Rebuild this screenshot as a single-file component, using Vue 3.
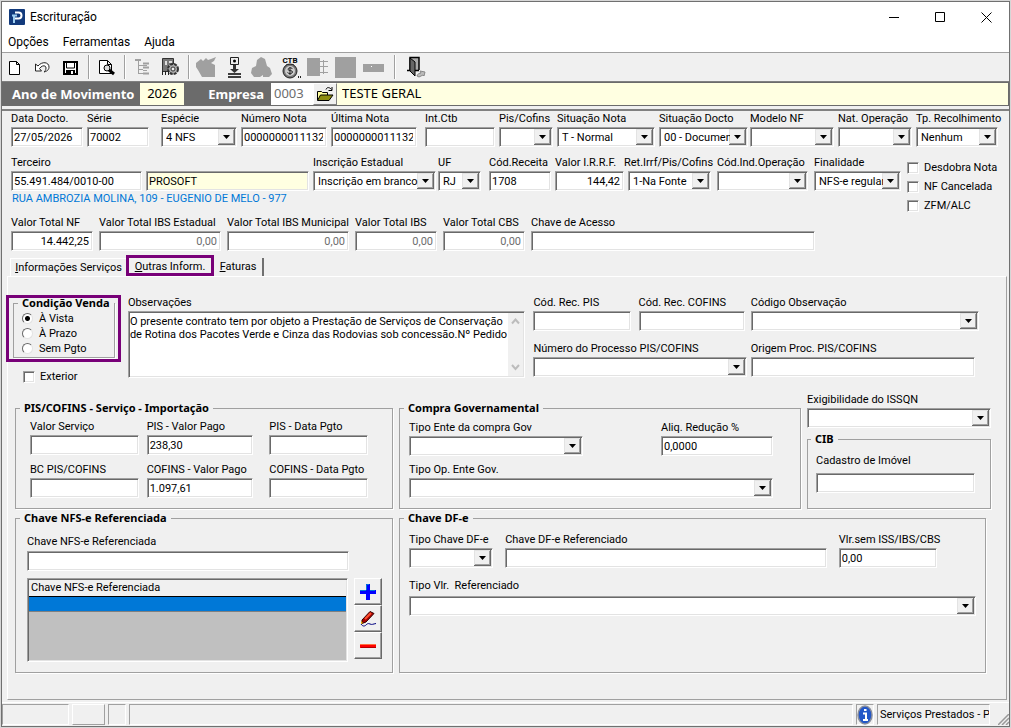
<template>
  <div class="window">
    <header class="title-bar">
      <svg class="logo" width="16" height="16" viewBox="0 0 16 16">
        <rect width="16" height="16" rx="1" fill="#123a7c" />
        <path d="M6 3.500h3.500a3 3 0 0 1 0 6H6" fill="none" stroke="#fff" stroke-width="2" />
        <path d="M3 6.500h5M5 7v7" fill="none" stroke="#9fd0f2" stroke-width="2" />
      </svg>
      <span class="title">Escrituração</span>
      <button class="win-btn" aria-label="Minimizar">
        <svg width="11" height="11"><path d="M0 5.500h10" stroke="#000" /></svg>
      </button>
      <button class="win-btn" aria-label="Maximizar">
        <svg width="11" height="11"><path d="M.5.5h9v9h-9z" fill="none" stroke="#000" /></svg>
      </button>
      <button class="win-btn" aria-label="Fechar">
        <svg width="11" height="11"><path d="M.5.5l10 10M10.500.5l-10 10" stroke="#000" /></svg>
      </button>
    </header>

    <nav class="menu">
      <a href="#">Opções</a>
      <a href="#">Ferramentas</a>
      <a href="#">Ajuda</a>
    </nav>

    <div class="toolbar">
      <button class="tool" aria-label="Novo">
        <svg width="24" height="24"><path d="M7.500 6.500h7l3 3v10h-10zM14.500 6.500v3h3" fill="#fff" stroke="#000" /></svg>
      </button>
      <button class="tool" aria-label="Desfazer">
        <svg width="24" height="24"><path d="M5.500 9v7h6l-2-2.500C12 10 16 10 16 13c0 2-1 3-2 4 4-1 5-3 5-5 0-5-7-6-11-1z" fill="#fff" stroke="#222" /></svg>
      </button>
      <button class="tool" aria-label="Salvar">
        <svg width="24" height="24">
          <path d="M6 7h13v12H6z" fill="#fff" stroke="#000" stroke-width="2" />
          <path d="M8.500 7v6h8V7" fill="none" stroke="#000" />
          <path d="M8 15h9v4H8z" fill="#000" /><path d="M13 16h2v3h-2z" fill="#fff" />
        </svg>
      </button>
      <span class="sep"></span>
      <button class="tool" aria-label="Visualizar">
        <svg width="24" height="24">
          <path d="M5.500 5.500h8l4 4v9h-12zM13.500 5.500v4h4" fill="#fff" stroke="#000" />
          <circle cx="13" cy="13" r="3" fill="#ddd" stroke="#000" /><path d="M15 15l5 4" stroke="#000" stroke-width="3" />
        </svg>
      </button>
      <span class="sep"></span>
      <button class="tool" aria-label="Plano">
        <svg width="24" height="24" fill="none" stroke="#a0a0a0">
          <path d="M8.500 6v13M9 10.500h4M9 14.500h4M9 18.500h4" />
          <path d="M5 5h6M13 8.500h6M13 12.500h6M13 18.500h6" stroke-width="2" />
          <path d="M13 10.500h4M13 15.500h4" />
        </svg>
      </button>
      <button class="tool" aria-label="Configurar">
        <svg width="24" height="24">
          <path d="M4.500 3.500h11v13h-11z" fill="#777" stroke="#333" /><path d="M7 6h2v4H7zM11 6h3v2h-3zM11 10h2v2h-2z" fill="#ddd" />
          <circle cx="15" cy="14" r="5" fill="#aaa" stroke="#333" stroke-width="2" stroke-dasharray="3 1" />
          <circle cx="15" cy="14" r="2" fill="#f0f0f0" stroke="#333" /><path d="M4.500 16v4M7.500 16v4M10.500 16v4" stroke="#222" />
        </svg>
      </button>
      <span class="sep"></span>
      <button class="tool" aria-label="Impostos" disabled>
        <svg width="24" height="24"><path d="M2 8l5-4 2 2 3-3 2 2 3-1 5-2-2 4-3 2 4 2v12H8l-4-7-2-3z" fill="#a0a0a0" /></svg>
      </button>
      <button class="tool" aria-label="Importar">
        <svg width="24" height="24">
          <path d="M8.500 2.500h8v7h-8z" fill="#eee" stroke="#222" /><circle cx="12.500" cy="6" r="1.500" />
          <path d="M11 10h3v4h3l-4.500 4L8 14h3z" fill="#333" /><path d="M6 19h13M6 22h13" stroke="#000" stroke-width="1.500" />
        </svg>
      </button>
      <button class="tool" aria-label="Saldos" disabled>
        <svg width="24" height="24"><path d="M11 2l4 2 2 7 3 2 2 6-3 3h-6v-2l-3 2H4l-3-4 1-5 4-2 1-6z" fill="#a0a0a0" /></svg>
      </button>
      <button class="tool" aria-label="Contabilidade">
        <svg width="24" height="24">
          <text x="12" y="8" text-anchor="middle" class="ctb">CTB</text>
          <path d="M8 9h8l-2 3h-4z" fill="#333" />
          <circle cx="12" cy="16" r="7" fill="#777" stroke="#222" /><circle cx="12" cy="16" r="5" fill="#ccc" />
          <path d="M14.500 14c-1-2-5-1-4.500.5s4.500.5 4.500 2.500-4 2-5 .5M12 12v8" fill="none" stroke="#222" />
          <path d="M20 22h3" stroke="#222" stroke-width="2" stroke-dasharray="1 1" />
        </svg>
      </button>
      <button class="tool" aria-label="Transferir" disabled>
        <svg width="24" height="24"><path d="M1 3h13v18H1z" fill="#a0a0a0" /><path d="M14 6.500h8M14 11.500h8M14 17.500h8M17.500 5v14" stroke="#a0a0a0" /></svg>
      </button>
      <button class="tool" aria-label="Quadro" disabled>
        <svg width="24" height="24"><path d="M1 2h21v21H1z" fill="#a0a0a0" /></svg>
      </button>
      <button class="tool" aria-label="Baixar" disabled>
        <svg width="24" height="24"><path d="M1 9h21v8H1z" fill="#a0a0a0" /><path d="M9 11h1v1H9z" fill="#fff" /></svg>
      </button>
      <span class="sep sep-exit"></span>
      <button class="tool" aria-label="Sair">
        <svg width="24" height="24">
          <path d="M6 15V2.500h9V15M3 15.500h12" fill="#aaa" stroke="#000" stroke-width="1.500" />
          <path d="M6 3l5 4v14l-5-5z" fill="#666" stroke="#000" />
          <path d="M13 21c0-2 3-3 4-3l-1-2 5 1-1 4-1-1-4 2z" fill="#bbb" stroke="#888" />
        </svg>
      </button>
    </div>

    <div class="company">
      <label class="band-year" for="ano">Ano de Movimento</label>
      <input id="ano" class="year" value="2026">
      <label class="band-company" for="empresa">Empresa</label>
      <input id="empresa" class="code" value="0003" readonly>
      <button class="open" aria-label="Abrir empresa">
        <svg width="18" height="16">
          <path d="M1.500 14V5.500h4l1 1h5V9" fill="#ffff9c" stroke="#000" />
          <path d="M1.500 14.500l3-5.500H17l-4 5.500z" fill="#8c8c10" stroke="#000" />
          <path d="M10 3.500c1-3 4-2 5.500 0M16 1v3.500h-3.500" fill="none" stroke="#000" />
        </svg>
      </button>
      <input class="name" aria-label="Nome da empresa" value="TESTE GERAL" readonly>
    </div>

    <main class="form">
      <div class="row row-doc">
        <div class="field"><label for="data">Data Docto.</label><input id="data" value="27/05/2026"></div>
        <div class="field end-12"><label for="serie">Série</label><input id="serie" value="70002"></div>
        <div class="field"><label for="especie">Espécie</label><select id="especie"><option>4 NFS</option></select></div>
        <div class="field"><label for="numero">Número Nota</label><input id="numero" value="0000000011132"></div>
        <div class="field end-8"><label for="ultima">Última Nota</label><input id="ultima" value="0000000011132"></div>
        <div class="field"><label for="intctb">Int.Ctb</label><input id="intctb"></div>
        <div class="field"><label for="pis">Pis/Cofins</label><select id="pis"><option></option></select></div>
        <div class="field"><label for="sitnota">Situação Nota</label><select id="sitnota"><option>T - Normal</option></select></div>
        <div class="field end-2"><label for="sitdoc">Situação Docto</label><select id="sitdoc"><option>00 - Documento Regular</option></select></div>
        <div class="field"><label for="modelo">Modelo NF</label><select id="modelo"><option></option></select></div>
        <div class="field"><label for="natop">Nat. Operação</label><select id="natop"><option></option></select></div>
        <div class="field end-0"><label for="recolh">Tp. Recolhimento</label><select id="recolh"><option>Nenhum</option></select></div>
      </div>

      <div class="third">
        <div class="third-main">
          <div class="row row-third">
            <div class="field"><label for="terceiro">Terceiro</label><input id="terceiro" value="55.491.484/0010-00"></div>
            <div class="field bare"><input class="yellow" aria-label="Nome do terceiro" value="PROSOFT" readonly></div>
            <div class="field end-2"><label for="insc">Inscrição Estadual</label><select id="insc"><option>Inscrição em branco</option></select></div>
            <div class="field end-8"><label for="uf">UF</label><select id="uf"><option>RJ</option></select></div>
            <div class="field"><label for="receita">Cód.Receita</label><input id="receita" value="1708"></div>
            <div class="field end-0"><label for="irrf">Valor I.R.R.F.</label><input id="irrf" class="num" value="144,42"></div>
            <div class="field end-6 indent"><label for="ret">Ret.Irrf/Pis/Cofins</label><select id="ret"><option>1-Na Fonte</option></select></div>
            <div class="field end-6"><label for="indop">Cód.Ind.Operação</label><select id="indop"><option></option></select></div>
            <div class="field end-6"><label for="final">Finalidade</label><select id="final"><option>NFS-e regular</option></select></div>
          </div>
          <p class="address">RUA AMBROZIA MOLINA, 109 - EUGENIO DE MELO - 977</p>
        </div>
        <div class="flags">
          <label v-for="flag in flags" :key="flag" class="tick"><input type="checkbox">{{ flag }}</label>
        </div>
      </div>

      <div class="row row-total">
        <div class="field end-6"><label for="totnf">Valor Total NF</label><input id="totnf" class="num" value="14.442,25"></div>
        <div v-for="total in totals" :key="total.id" class="field end-6">
          <label :for="total.id">{{ total.label }}</label>
          <input :id="total.id" class="num muted" value="0,00" readonly>
        </div>
        <div class="field end-0"><label for="chave">Chave de Acesso</label><input id="chave"></div>
      </div>

      <div class="tabs" role="tablist">
        <button class="tab tab-first" role="tab"><u>I</u>nformações Serviços</button>
        <button class="tab marked" role="tab" aria-selected="true"><u>O</u>utras Inform.</button>
        <button class="tab tab-last" role="tab"><u>F</u>aturas</button>
      </div>

      <section class="panel">
        <div class="upper">
          <div class="sale">
            <div class="mark">
              <fieldset class="group terms">
                <legend>Condição Venda</legend>
                <label v-for="term in terms" :key="term" class="option">
                  <input v-model="selected" type="radio" name="venda" :value="term">{{ term }}
                </label>
              </fieldset>
            </div>
            <label class="tick abroad"><input type="checkbox">Exterior</label>
          </div>

          <div class="field obs end-8">
            <label for="obs">Observações</label>
            <div class="memo">
              <textarea id="obs" v-model="notes" spellcheck="false"></textarea>
              <div class="scroll">
                <svg width="9" height="7"><path d="M1 5.500l3.500-4 3.500 4" fill="none" stroke="#bcbcbc" stroke-width="2" /></svg>
                <svg width="9" height="7"><path d="M1 1l3.500 4L8 1" fill="none" stroke="#bcbcbc" stroke-width="2" /></svg>
              </div>
            </div>
          </div>

          <div class="codes">
            <div class="row row-codes">
              <div class="field end-8"><label for="recpis">Cód. Rec. PIS</label><input id="recpis"></div>
              <div class="field end-6"><label for="reccof">Cód. Rec. COFINS</label><input id="reccof"></div>
              <div class="field end-0"><label for="codobs">Código Observação</label><select id="codobs"><option></option></select></div>
            </div>
            <div class="row row-process">
              <div class="field"><label for="proc">Número do Processo PIS/COFINS</label><select id="proc"><option></option></select></div>
              <div class="field"><label for="origem">Origem Proc. PIS/COFINS</label><input id="origem"></div>
            </div>
          </div>
        </div>

        <div class="groups">
          <fieldset class="group import">
            <legend>PIS/COFINS - Serviço - Importação</legend>
            <div class="row row-import">
              <div class="field end-8"><label for="valserv">Valor Serviço</label><input id="valserv"></div>
              <div class="field end-16"><label for="pispago">PIS - Valor Pago</label><input id="pispago" value="238,30"></div>
              <div class="field end-0"><label for="pisdata">PIS - Data Pgto</label><input id="pisdata"></div>
              <div class="field end-8"><label for="bc">BC PIS/COFINS</label><input id="bc"></div>
              <div class="field end-16"><label for="cofpago">COFINS - Valor Pago</label><input id="cofpago" value="1.097,61"></div>
              <div class="field end-0"><label for="cofdata">COFINS - Data Pgto</label><input id="cofdata"></div>
            </div>
          </fieldset>

          <div class="government">
            <fieldset class="group purchase">
              <legend>Compra Governamental</legend>
              <div class="row row-purchase">
                <div class="field end-78"><label for="ente">Tipo Ente da compra Gov</label><select id="ente"><option></option></select></div>
                <div class="field end-0"><label for="aliq">Aliq. Redução %</label><input id="aliq" value="0,0000"></div>
                <div class="field wide end-0"><label for="opente">Tipo Op. Ente Gov.</label><select id="opente"><option></option></select></div>
              </div>
            </fieldset>
            <div class="issqn">
              <div class="field end-0"><label for="exig">Exigibilidade do ISSQN</label><select id="exig"><option></option></select></div>
              <fieldset class="group cib">
                <legend>CIB</legend>
                <div class="field end-0"><label for="imovel">Cadastro de Imóvel</label><input id="imovel"></div>
              </fieldset>
            </div>
          </div>

          <fieldset class="group nfse">
            <legend>Chave NFS-e Referenciada</legend>
            <div class="field end-0 key"><label for="nfse">Chave NFS-e Referenciada</label><input id="nfse"></div>
            <div class="list">
              <div class="grid">
                <table>
                  <thead><tr><th>Chave NFS-e Referenciada</th></tr></thead>
                  <tbody><tr><td></td></tr></tbody>
                </table>
              </div>
              <div class="actions">
                <button class="act" aria-label="Adicionar">
                  <svg width="16" height="16"><path d="M6 0h4v6h6v4h-6v6H6v-6H0V6h6z" fill="#00f" /><path d="M6.500 6V.5H9M0 6.500h6M10 6.500h5" fill="none" stroke="#0078d7" /></svg>
                </button>
                <button class="act" aria-label="Editar">
                  <svg width="16" height="16">
                    <path d="M2 9l8-8.500 4 2L6 11l-4 1.500z" fill="#a80000" stroke="#300" />
                    <path d="M5 8l6-6" stroke="#ff5030" stroke-width="2" /><path d="M1 10l2 2-2 1z" fill="#e8b000" />
                    <path d="M1 13c2 3 4 2 5 1s2-2 4-1 3 0 6-.5" fill="none" stroke="#000080" />
                  </svg>
                </button>
                <button class="act" aria-label="Remover">
                  <svg width="16" height="16"><path d="M0 6h16v4H0z" fill="#f00" /><path d="M0 6.500h16" stroke="#ff7040" /><path d="M1 9.500h15" stroke="#b00000" /></svg>
                </button>
              </div>
            </div>
          </fieldset>

          <fieldset class="group dfe">
            <legend>Chave DF-e</legend>
            <div class="row row-dfe">
              <div class="field end-12"><label for="tipodfe">Tipo Chave DF-e</label><select id="tipodfe"><option></option></select></div>
              <div class="field end-12"><label for="chavedfe">Chave DF-e Referenciado</label><input id="chavedfe"></div>
              <div class="field end-0"><label for="vlr">Vlr.sem ISS/IBS/CBS</label><input id="vlr" value="0,00"></div>
            </div>
            <div class="field end-0 ref"><label for="tipovlr">Tipo Vlr.&nbsp; Referenciado</label><select id="tipovlr"><option></option></select></div>
          </fieldset>
        </div>
      </section>
    </main>

    <footer class="status">
      <span class="cell cell-a"></span>
      <span class="cell cell-b"></span>
      <span class="cell cell-c"></span>
      <span class="cell cell-d"></span>
      <span class="cell cell-icon">
        <svg width="16" height="20" viewBox="0 0 16 20">
          <ellipse cx="8" cy="10" rx="7" ry="9" fill="#2357c8" stroke="#8a8f9c" stroke-width="1.500" />
          <path d="M7 5h2.500M6 8.500h3v6M6 15h5" fill="none" stroke="#fff" stroke-width="2" />
        </svg>
      </span>
      <span class="cell cell-text">Serviços Prestados - P</span>
      <svg class="grip" width="11" height="11"><path d="M0 11L11 0M4 11l7-7M8 11l3-3" stroke="#999" stroke-width="1.500" /></svg>
    </footer>
  </div>
</template>

<script setup>
import { ref } from "vue"

const flags = ["Desdobra Nota", "NF Cancelada", "ZFM/ALC"]

const totals = [
  { id: "ibsest", label: "Valor Total IBS Estadual" },
  { id: "ibsmun", label: "Valor Total IBS Municipal" },
  { id: "ibs", label: "Valor Total IBS" },
  { id: "cbs", label: "Valor Total CBS" },
]

const terms = ["À Vista", "À Prazo", "Sem Pgto"]
const selected = ref("À Vista")

const notes = ref(
  "O presente contrato tem por objeto a Prestação de Serviços de Conservação\n" +
  "de Rotina dos Pacotes Verde e Cinza das Rodovias sob concessão.Nº Pedido"
)
</script>

<style>
body {
  background: #d6d6d6;
}
</style>

<style scoped>
* {
  box-sizing: border-box;
}

.window {
  display: flex;
  flex-direction: column;
  min-height: calc(100vh - 2px);
  margin: 1px;
  border: 1px solid #707070;
  background: #f0f0f0;
  color: #000;
  font-family: Roboto, "Noto Sans", sans-serif;
  font-size: 11px;
  line-height: 15px;
}

button, input, select, textarea {
  margin: 0;
  border-radius: 0;
  color: inherit;
  font: inherit;
}

button {
  padding: 0;
  border: 0;
  background: none;
}

svg {
  display: block;
}

/* ---------- Title and menu ---------- */

.title-bar {
  display: flex;
  align-items: center;
  height: 30px;
  padding-left: 7px;
  background: #fff;
  font-size: 12px;
}

.title {
  flex: 1;
  padding-left: 5px;
}

.win-btn {
  display: flex;
  align-items: center;
  justify-content: center;
  width: 46px;
  height: 28px;
}

.menu {
  display: flex;
  gap: 14px;
  height: 20px;
  padding-left: 6px;
  background: #fff;
  font-size: 12px;
  line-height: 20px;
}

.menu a {
  color: #000;
  text-decoration: none;
}

/* ---------- Toolbar ---------- */

.toolbar {
  display: flex;
  align-items: center;
  height: 30px;
  border-top: 1px solid #a0a0a0;
  border-bottom: 1px solid #808080;
}

.tool {
  width: 28px;
}

.sep {
  width: 2px;
  height: 24px;
  margin: 0 4px 0 2px;
  border-left: 1px solid #a0a0a0;
  background: #fff;
}

.sep-exit {
  margin: 0 8px 0 4px;
}

.ctb {
  font-size: 8px;
  font-weight: 700;
}

.company {
  display: flex;
  height: 24px;
  padding: 1px 1px 1px 0;
  background: #6b6b6b;
  font-family: "Noto Sans", "DejaVu Sans", sans-serif;
  font-size: 13px;
}

.company label {
  flex: none;
  color: #fff;
  font-weight: 700;
  line-height: 22px;
}

.company input {
  padding: 0 3px 2px;
  border: 0;
}

.band-year {
  width: 138px;
  padding-left: 10px;
}

.year {
  width: 44px;
  background: #ffffe1;
  text-align: center;
}

.band-company {
  width: 87px;
  padding-right: 7px;
  text-align: right;
}

.code {
  width: 42px;
  color: #6d6d6d;
}

.open {
  display: flex;
  align-items: center;
  justify-content: center;
  width: 24px;
  border: 1px solid;
  border-color: #fff #808080 #808080 #fff;
  background: #f0f0f0;
}

.company .name {
  flex: 1;
  min-width: 0;
  padding-left: 5px;
  background: #ffffe1;
}

/* ---------- Fields ---------- */

.form {
  display: flex;
  flex: 1;
  flex-direction: column;
  margin-top: 3px;
  border-top: 2px solid #808080;
}

.row {
  display: grid;
}

.field {
  display: flex;
  flex-direction: column;
  min-width: 0;
  padding-right: 4px;
}

.field label {
  height: 16px;
  white-space: nowrap;
}

.field input, .field select, .memo {
  width: 100%;
  height: 20px;
  border: 1px solid;
  border-color: #a0a0a0 #fff #fff #a0a0a0;
  background-color: #fff;
  box-shadow: inset 1px 1px #696969, inset -1px -1px #e3e3e3;
}

.field input {
  padding: 0 3px 0 2px;
}

.field select {
  padding: 0 17px 0 4px;
  appearance: none;
  background-image: url("data:image/svg+xml,%3Csvg xmlns='http://www.w3.org/2000/svg' width='17' height='16'%3E%3Cpath d='M0 0h17v16H0z' fill='%23696969'/%3E%3Cpath d='M0 0h16v15H0z' fill='%23e3e3e3'/%3E%3Cpath d='M1 1h15v14H1z' fill='%23a0a0a0'/%3E%3Cpath d='M1 1h14v13H1z' fill='%23f0f0f0'/%3E%3Cpath d='M5 6h7L8.500 10z'/%3E%3C/svg%3E");
  background-position: right 1px center;
  background-repeat: no-repeat;
}

.field .num {
  text-align: right;
}

.field .muted {
  color: #6d6d6d;
}

.field .yellow {
  background-color: #ffffe1;
}

.end-0 { padding-right: 0; }
.end-2 { padding-right: 2px; }
.end-6 { padding-right: 6px; }
.end-8 { padding-right: 8px; }
.end-12 { padding-right: 12px; }
.end-16 { padding-right: 16px; }
.end-78 { padding-right: 78px; }

.bare {
  justify-content: flex-end;
}

.indent select {
  width: auto;
  margin-left: 4px;
}

.row-doc {
  grid-template-columns: 76fr 74fr 80fr 90fr 94fr 74fr 58fr 102fr 91fr 88fr 78fr 82fr;
  padding: 0 11px 0 9px;
}

.third {
  display: grid;
  grid-template-columns: 896fr 91fr;
  padding: 8px 11px 0 9px;
}

.third-main {
  min-width: 0;
}

.row-third {
  grid-template-columns: 135fr 167fr 125fr 51fr 66fr 69fr 93fr 97fr 93fr;
}

.address {
  margin: 0;
  padding-left: 1px;
  color: #0078d7;
  line-height: 16px;
}

.flags {
  display: flex;
  flex-direction: column;
  gap: 4px;
  min-width: 0;
  padding-top: 5px;
}

.tick {
  display: flex;
  gap: 5px;
  align-items: center;
  white-space: nowrap;
}

.tick input {
  flex: none;
  width: 12px;
  height: 12px;
  appearance: none;
  border: 1px solid;
  border-color: #a0a0a0 #fff #fff #a0a0a0;
  background: #fff;
  box-shadow: inset 1px 1px #696969, inset -1px -1px #e3e3e3;
}

.row-total {
  grid-template-columns: 88fr 128fr 128fr 88fr 88fr 284fr 183fr;
  padding: 2px 11px 0 9px;
}

/* ---------- Tabs ---------- */

.tabs {
  display: flex;
  align-items: flex-end;
  height: 25px;
  padding-left: 8px;
}

.tab {
  height: 18px;
  line-height: 18px;
}

.tab-first {
  width: 116px;
  border-top: 1px solid #fff;
  border-left: 1px solid #fff;
}

.marked {
  width: 88px;
  height: 21px;
  border: 3px solid #780078;
  line-height: 17px;
}

.tab-last {
  width: 50px;
  border-right: 2px solid #707070;
}

.panel {
  flex: 1;
  margin: 0 2px 2px 5px;
  padding-top: 18px;
  border: 1px solid;
  border-color: #fff #a0a0a0 #a0a0a0 #fff;
}

.upper {
  display: grid;
  grid-template-columns: 120fr 406fr 446fr;
  padding-right: 27px;
}

.mark {
  width: 115px;
  margin-left: -2px;
  padding: 0 3px 1px 4px;
  border: 3px solid #780078;
}

.group {
  min-width: 0;
  margin: 0;
  border: 1px solid #a0a0a0;
  box-shadow: 1px 1px #fff;
}

.group legend {
  padding: 0 4px;
  font-family: "Noto Sans", "DejaVu Sans", sans-serif;
  font-weight: 700;
  line-height: 14px;
}

.terms {
  margin-top: -2px;
  padding: 1px 0 1px 4px;
}

.terms legend {
  white-space: nowrap;
}

.option {
  display: flex;
  gap: 6px;
  align-items: center;
  padding-left: 4px;
}

.option input {
  width: 11px;
  height: 11px;
  appearance: none;
  border: 1px solid;
  border-color: #696969 #e3e3e3 #e3e3e3 #696969;
  border-radius: 50%;
  background: #fff;
}

.option input:checked {
  background: radial-gradient(circle, #000 2px, #fff 3px);
}

.abroad {
  margin: 7px 0 0 15px;
}

.memo {
  display: flex;
  height: 67px;
  padding: 1px;
}

.memo textarea {
  flex: 1;
  min-width: 0;
  padding: 2px 0 0;
  overflow: hidden;
  border: 0;
  outline: 0;
  background: none;
  line-height: 13px;
  resize: none;
  white-space: pre;
}

.scroll {
  display: flex;
  flex-direction: column;
  align-items: center;
  justify-content: space-between;
  width: 15px;
  padding: 5px 0;
  background: #f0f0f0;
}

.row-codes {
  grid-template-columns: 105fr 112fr 228fr;
}

.row-process {
  grid-template-columns: 217fr 228fr;
  padding-top: 10px;
}

/* ---------- Groups ---------- */

.groups {
  display: grid;
  grid-template-columns: 378fr 592fr;
  gap: 2px 6px;
  margin-top: 8px;
  padding: 0 15px 0 7px;
}

.import {
  margin-top: 9px;
  padding: 4px 24px 10px 14px;
}

.import legend {
  margin-left: -10px;
}

.row-import {
  grid-template-columns: 117fr 123fr 99fr;
  row-gap: 7px;
}

.government {
  display: grid;
  grid-template-columns: 402fr 184fr;
  gap: 6px;
}

.purchase {
  margin-top: 9px;
  padding: 5px 27px 10px 9px;
}

.purchase legend, .dfe legend, .cib legend {
  margin-left: -5px;
}

.row-purchase {
  grid-template-columns: 252fr 112fr;
  row-gap: 6px;
}

.wide {
  grid-column: span 2;
}

.issqn {
  display: flex;
  flex-direction: column;
}

.cib {
  flex: 1;
  margin-top: 4px;
  padding: 7px 15px 14px 8px;
}

.cib .field label {
  height: 20px;
}

.nfse {
  padding: 9px 10px 10px 11px;
}

.nfse legend {
  margin-left: -7px;
}

.key {
  padding-right: 33px;
}

.key label {
  height: 17px;
}

.list {
  display: flex;
  gap: 6px;
  margin-top: 7px;
}

.grid {
  flex: 1;
  height: 84px;
  padding: 1px;
  border: 1px solid;
  border-color: #a0a0a0 #fff #fff #a0a0a0;
  background: #c0c0c0;
  box-shadow: inset 1px 1px #696969, inset -1px -1px #e3e3e3;
}

.grid table {
  width: 100%;
  border-collapse: collapse;
}

.grid th {
  height: 16px;
  padding: 0 2px;
  border-bottom: 1px solid #000;
  background: #f0f0f0;
  font-weight: 400;
  text-align: left;
}

.grid td {
  height: 15px;
  padding: 0;
  border-bottom: 1px solid #808080;
  background: #0078d7;
}

.actions {
  width: 28px;
}

.act {
  display: flex;
  align-items: center;
  justify-content: center;
  width: 28px;
  height: 27px;
  border: 1px solid;
  border-color: #fff #696969 #696969 #fff;
  box-shadow: inset -1px -1px #a0a0a0;
}

.dfe {
  margin-right: 5px;
  padding: 7px 9px 8px 9px;
}

.row-dfe {
  grid-template-columns: 96fr 333fr 98fr 39fr;
}

.ref {
  padding-top: 10px;
}

.ref label {
  height: 18px;
}

/* ---------- Status bar ---------- */

.status {
  display: flex;
  gap: 3px;
  height: 24px;
  padding: 1px 0;
  border-top: 1px solid #fff;
}

.cell {
  border: 1px solid;
  border-color: #a0a0a0 #fff #fff #a0a0a0;
}

.cell-a { width: 67px; }
.cell-b {
  width: 33px;
  border-color: #fff #a0a0a0 #a0a0a0 #fff;
}
.cell-c { width: 18px; }
.cell-d { flex: 1; }
.cell-icon { width: 18px; }

.cell-text {
  width: 113px;
  padding-left: 2px;
  overflow: hidden;
  line-height: 20px;
  white-space: nowrap;
}

.grip {
  align-self: flex-end;
  margin-left: 5px;
}
</style>
